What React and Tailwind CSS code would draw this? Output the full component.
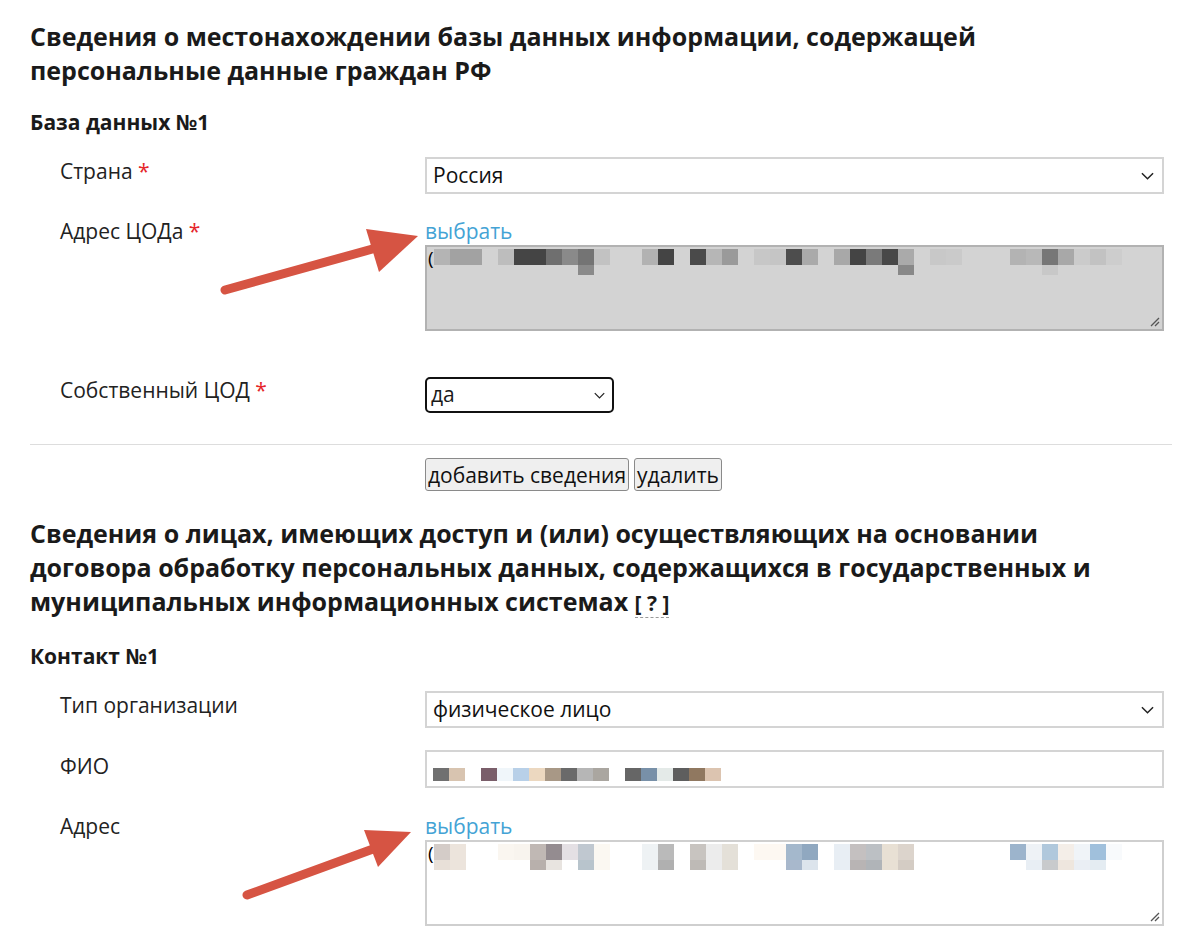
import React from "react";

const FONT = { fontFamily: '"Open Sans", "Noto Sans", sans-serif' };

// pixelated (censored) text: [cell index, top colour, bottom colour]
const DB_ADDRESS = [
    [0, "#b4b4b4"], [1, "#a2a2a2"], [2, "#a2a2a2"], [4, "#bdbdbd"], [5, "#454545"], [6, "#444444"],
    [7, "#6f6f6f"], [8, "#8a8a8a"], [9, "#747474", "#8a8a8a"], [10, "#c2c2c2"], [13, "#b2b2b2"],
    [14, "#444444"], [16, "#4a4a4a"], [17, "#b6b6b6"], [18, "#9a9a9a"], [20, "#c7c7c7"], [21, "#c5c5c5"],
    [22, "#4d4d4d"], [23, "#aaaaaa"], [25, "#a8a8a8"], [26, "#444444"], [27, "#7a7a7a"], [28, "#484848"],
    [29, "#aaaaaa", "#888888"], [31, "#c8c8c8"], [32, "#cacaca"], [36, "#b3b3b3"], [37, "#b8b8b8"],
    [38, "#777777", "#c8c8c8"], [39, "#a8a8a8"], [40, "#cbcbcb"], [41, "#c2c2c2"], [42, "#cdcdcd"],
];

const FIO = [
    [0, "#707070"], [1, "#d8c4b0"], [3, "#7a5e6a"], [4, "#f0f6fa"], [5, "#b8d0e8"], [6, "#ecd8c0"],
    [7, "#a89886"], [8, "#6a6a6a"], [9, "#b6b6b6"], [10, "#aaa6a0"], [12, "#666666"], [13, "#7890a8"],
    [14, "#e4eae8"], [15, "#5e5e5e"], [16, "#907860"], [17, "#dcc4b0"],
];

const ADDRESS = [
    [0, "#d4ccc8", "#e8e0d8"], [1, "#ece4dc", "#ece4dc"], [4, "#faf6f0"], [5, "#f8f4ee"],
    [6, "#c0b8b4", "#b8b0ac"], [7, "#948c90", "#e8e4e0"], [8, "#e4e0e4"], [9, "#c0c8d0", "#b8c4cc"],
    [10, "#fbf8f2", "#fbf8f2"], [13, "#eef2f4", "#eef2f4"], [14, "#bababa", "#b0b0b0"],
    [16, "#c8c4c0", "#bebab6"], [17, "#ececec", "#ececec"], [18, "#e4e0d8", "#e4e0d8"], [20, "#fdf8f2"],
    [21, "#fdf8f2"], [22, "#a4b8cc", "#a8b8cc"], [23, "#90a8c0", "#dce4ec"], [25, "#e8eef4", "#e8eef4"],
    [26, "#c4c0c0", "#b8b4b4"], [27, "#bcc0c4", "#b0b4b8"], [28, "#e8e0d4", "#e8e0d4"],
    [29, "#dcd4cc", "#d4ccc4"], [36, "#9cb4cc"], [37, "#eef2f6", "#e8eef4"], [38, "#b0c8dc", "#c8cacc"],
    [39, "#f4eee8", "#eee6de"], [40, "#f0f4f8", "#eaeef4"], [41, "#a0c0dc", "#e4ecf2"], [42, "#f8fafc"],
];

const Cells = ({ cells, top = "h-[16px]", bottom = "h-[10px]", twoRows = true }) => {
    const map = {};
    cells.forEach(([i, a, b]) => (map[i] = [a, b]));
    const count = Math.max(...cells.map((c) => c[0])) + 1;
    const row = (k, h) => (
        <div className="flex">
            {Array.from({ length: count }).map((_, i) => (
                <div
                    key={i}
                    className={`w-[16px] shrink-0 ${h}`}
                    style={{ backgroundColor: (map[i] && map[i][k]) || "transparent" }}
                />
            ))}
        </div>
    );
    return (
        <div className="flex flex-col">
            {row(0, top)}
            {twoRows && row(1, bottom)}
        </div>
    );
};

const Chevron = ({ className }) => (
    <svg className={className} viewBox="0 0 14 8" fill="none" stroke="#222" strokeWidth="1.6">
        <path d="M1 1l6 6 6-6" />
    </svg>
);

const Grip = () => (
    <svg className="absolute right-[2px] bottom-[2px] w-[12px] h-[12px]" viewBox="0 0 12 12" stroke="#555" strokeWidth="1.3">
        <path d="M11 3L3 11M11 7L7 11" />
    </svg>
);

const Label = ({ children, req }) => (
    <div className="w-[395px] shrink-0 pl-[30px] text-[21px] leading-[28px] text-[#222]">
        {children}
        {req && <span className="text-[#e5252a]"> *</span>}
    </div>
);

const Select = ({ value }) => (
    <div className="flex-1 h-[37px] flex items-center justify-between border-2 border-[#d4d4d4] bg-white pl-[6px] pr-[8px] text-[21px] text-[#111]">
        <span>{value}</span>
        <Chevron className="w-[13px] h-[8px]" />
    </div>
);

const Link = () => <div className="text-[21px] leading-[28px] text-[#44a3d5]">выбрать</div>;

const Area = ({ gray, cells }) => (
    <div
        className={`relative h-[86px] border-2 ${gray ? "bg-[#d3d3d3] border-[#b2b2b2]" : "bg-white border-[#cfcfcf]"} pl-[1px] pt-[1px]`}
    >
        <div className="flex items-start">
            <span className="w-[6px] text-[19px] leading-[20px] text-black">(</span>
            <div className="pt-[1px]">
                <Cells cells={cells} />
            </div>
        </div>
        <Grip />
    </div>
);

const Btn = ({ children }) => (
    <button className="h-[33px] px-[2px] border border-[#8a8a8a] rounded-[3px] bg-[#efefef] text-[21px] leading-[28px] text-[#111]">
        {children}
    </button>
);

const App = () => (
    <div className="relative w-[1200px] h-[952px] overflow-hidden bg-white text-[#1a1a1a]" style={FONT}>
        <div className="pt-[19px] pl-[30px] pr-[28px]">
            <h1 className="text-[25px] leading-[34px] font-bold">
                Сведения о местонахождении базы данных информации, содержащей
                <br />
                персональные данные граждан РФ
            </h1>
            <h2 className="mt-[21px] text-[21px] leading-[28px] font-bold">База данных №1</h2>

            <div className="mt-[21px] flex items-start">
                <Label req>Страна</Label>
                <div className="flex-1 flex mr-[8px]">
                    <Select value="Россия" />
                </div>
            </div>

            <div className="mt-[23px] flex items-start">
                <Label req>Адрес ЦОДа</Label>
                <div className="flex-1 mr-[8px]">
                    <Link />
                    <Area gray cells={DB_ADDRESS} />
                </div>
            </div>

            <div className="mt-[45px] flex items-start">
                <Label req>Собственный ЦОД</Label>
                <div className="mt-[1px] w-[189px] h-[36px] flex items-center justify-between border-2 border-[#111] rounded-[5px] bg-white pl-[4px] pr-[7px] text-[21px]">
                    <span>да</span>
                    <Chevron className="w-[11px] h-[7px]" />
                </div>
            </div>

            <div className="mt-[31px] h-[1px] bg-[#dddddd]" />

            <div className="mt-[13px] flex gap-[5px] pl-[395px]">
                <Btn>добавить сведения</Btn>
                <Btn>удалить</Btn>
            </div>

            <h1 className="mt-[25px] text-[25px] leading-[34px] font-bold">
                Сведения о лицах, имеющих доступ и (или) осуществляющих на основании
                <br />
                договора обработку персональных данных, содержащихся в государственных и
                <br />
                муниципальных информационных системах{" "}
                <span className="text-[21px] border-b border-dashed border-[#999]">[ ? ]</span>
            </h1>
            <h2 className="mt-[22px] text-[21px] leading-[28px] font-bold">Контакт №1</h2>

            <div className="mt-[21px] flex items-start">
                <Label>Тип организации</Label>
                <div className="flex-1 flex mr-[8px]">
                    <Select value="физическое лицо" />
                </div>
            </div>

            <div className="mt-[22px] flex items-start">
                <Label>
                    <span className="block pt-[2px]">ФИО</span>
                </Label>
                <div className="flex-1 mr-[8px] h-[38px] border-2 border-[#d4d4d4] bg-white pl-[6px] pt-[16px]">
                    <Cells cells={FIO} top="h-[13px]" twoRows={false} />
                </div>
            </div>

            <div className="mt-[24px] flex items-start">
                <Label>Адрес</Label>
                <div className="flex-1 mr-[8px]">
                    <Link />
                    <Area cells={ADDRESS} />
                </div>
            </div>
        </div>

        <svg className="absolute inset-0 pointer-events-none" width="1200" height="952" viewBox="0 0 1200 952">
            <g fill="#d65443" stroke="#d65443">
                <line x1="225" y1="290" x2="376" y2="248" strokeWidth="9" strokeLinecap="round" />
                <polygon points="418,236 366,229 379,272" stroke="none" />
                <line x1="247" y1="895" x2="373" y2="849" strokeWidth="9" strokeLinecap="round" />
                <polygon points="411,832 364,830 378,867" stroke="none" />
            </g>
        </svg>
    </div>
);

export default App;
